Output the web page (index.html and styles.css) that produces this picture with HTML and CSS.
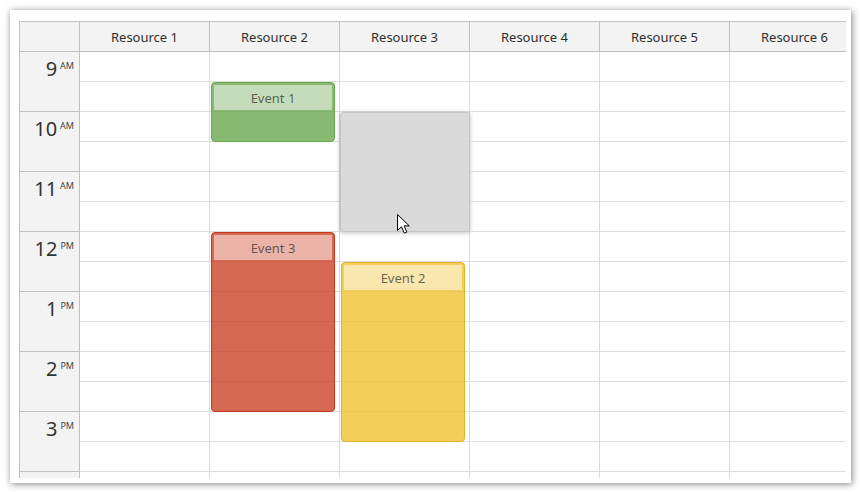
FILE: index.html
```html
<!DOCTYPE html>
<html>
<head>
<meta charset="utf-8">
<link rel="stylesheet" href="styles.css">
</head>
<body>
<div class="frame">
  <div class="cal">
    <div class="head">
      <div class="corner"></div>
      <div class="res">Resource 1</div>
      <div class="res">Resource 2</div>
      <div class="res">Resource 3</div>
      <div class="res">Resource 4</div>
      <div class="res">Resource 5</div>
      <div class="res">Resource 6</div>
    </div>
    <div class="body">
      <div class="hours">
        <div class="hour"><span class="num">9</span><span class="ampm">AM</span></div>
        <div class="hour"><span class="num">10</span><span class="ampm">AM</span></div>
        <div class="hour"><span class="num">11</span><span class="ampm">AM</span></div>
        <div class="hour"><span class="num">12</span><span class="ampm">PM</span></div>
        <div class="hour"><span class="num">1</span><span class="ampm">PM</span></div>
        <div class="hour"><span class="num">2</span><span class="ampm">PM</span></div>
        <div class="hour"><span class="num">3</span><span class="ampm">PM</span></div>
        <div class="hour"></div>
      </div>
      <div class="col">
        <div class="cell"></div><div class="cell"></div><div class="cell"></div><div class="cell"></div>
        <div class="cell"></div><div class="cell"></div><div class="cell"></div><div class="cell"></div>
        <div class="cell"></div><div class="cell"></div><div class="cell"></div><div class="cell"></div>
        <div class="cell"></div><div class="cell"></div><div class="cell"></div><div class="cell"></div>
      </div>
      <div class="col">
        <div class="cell"></div><div class="cell"></div><div class="cell"></div><div class="cell"></div>
        <div class="cell"></div><div class="cell"></div><div class="cell"></div><div class="cell"></div>
        <div class="cell"></div><div class="cell"></div><div class="cell"></div><div class="cell"></div>
        <div class="cell"></div><div class="cell"></div><div class="cell"></div><div class="cell"></div>
        <div class="event green ev1"><div class="bar">Event 1</div></div>
        <div class="event red ev3"><div class="bar">Event 3</div></div>
      </div>
      <div class="col">
        <div class="cell"></div><div class="cell"></div><div class="cell"></div><div class="cell"></div>
        <div class="cell"></div><div class="cell"></div><div class="cell"></div><div class="cell"></div>
        <div class="cell"></div><div class="cell"></div><div class="cell"></div><div class="cell"></div>
        <div class="cell"></div><div class="cell"></div><div class="cell"></div><div class="cell"></div>
        <div class="ghost"></div>
        <div class="event yellow ev2"><div class="bar">Event 2</div></div>
        <svg class="cursor" width="14" height="21" viewBox="0 0 14 21">
          <path d="M0.5 0.5 L0.5 16.5 L4.5 12.8 L7.3 19.2 L9.8 18.1 L7.1 11.9 L12.3 11.9 Z" fill="#fff" stroke="#000" stroke-width="1" stroke-linejoin="miter"/>
        </svg>
      </div>
      <div class="col">
        <div class="cell"></div><div class="cell"></div><div class="cell"></div><div class="cell"></div>
        <div class="cell"></div><div class="cell"></div><div class="cell"></div><div class="cell"></div>
        <div class="cell"></div><div class="cell"></div><div class="cell"></div><div class="cell"></div>
        <div class="cell"></div><div class="cell"></div><div class="cell"></div><div class="cell"></div>
      </div>
      <div class="col">
        <div class="cell"></div><div class="cell"></div><div class="cell"></div><div class="cell"></div>
        <div class="cell"></div><div class="cell"></div><div class="cell"></div><div class="cell"></div>
        <div class="cell"></div><div class="cell"></div><div class="cell"></div><div class="cell"></div>
        <div class="cell"></div><div class="cell"></div><div class="cell"></div><div class="cell"></div>
      </div>
      <div class="col">
        <div class="cell"></div><div class="cell"></div><div class="cell"></div><div class="cell"></div>
        <div class="cell"></div><div class="cell"></div><div class="cell"></div><div class="cell"></div>
        <div class="cell"></div><div class="cell"></div><div class="cell"></div><div class="cell"></div>
        <div class="cell"></div><div class="cell"></div><div class="cell"></div><div class="cell"></div>
      </div>
    </div>
  </div>
</div>
</body>
</html>
```

FILE: styles.css
```css
* { box-sizing: border-box; }
html, body {
  margin: 0;
  padding: 0;
  background: #ffffff;
}
body {
  padding: 10px;
  font-family: "Noto Sans", "Open Sans", sans-serif;
  color: #333;
}
.frame {
  width: 841px;
  height: 473px;
  background: #fff;
  box-shadow: 1px 1px 7px rgba(0, 0, 0, 0.5);
  padding: 11px 5px 5px 9px;
}
.cal {
  width: 827px;
  height: 457px;
  overflow: hidden;
}
.head {
  display: flex;
  height: 31px;
  border-top: 1px solid #c0c0c0;
  border-bottom: 1px solid #c0c0c0;
  background: #f3f3f3;
}
.corner {
  flex: none;
  width: 61px;
  border-left: 1px solid #c0c0c0;
  border-right: 1px solid #c0c0c0;
}
.res {
  flex: none;
  width: 130px;
  border-right: 1px solid #c0c0c0;
  display: flex;
  align-items: center;
  justify-content: center;
  font-size: 13px;
  color: #2e2e2e;
  padding-top: 1px;
}
.body {
  display: flex;
}
.hours {
  flex: none;
  width: 61px;
  border-left: 1px solid #c0c0c0;
  border-right: 1px solid #c0c0c0;
  background: #f3f3f3;
}
.hour {
  height: 60px;
  border-bottom: 1px solid #c0c0c0;
  display: flex;
  justify-content: flex-end;
  align-items: flex-start;
  padding: 5px 5px 0 0;
}
.num {
  font-size: 20px;
  line-height: 24px;
  color: #333;
}
.ampm {
  font-size: 9px;
  line-height: 12px;
  margin-left: 3px;
  margin-top: 3px;
  color: #444;
}
.col {
  flex: none;
  width: 130px;
  border-right: 1px solid #dadada;
  position: relative;
}
.cell {
  height: 30px;
  border-bottom: 1px solid #dedede;
}
.event {
  position: absolute;
  left: 1px;
  width: 124px;
  border: 1px solid;
  border-radius: 4px;
  padding: 2px;
}
.bar {
  height: 25px;
  background: rgba(255, 255, 255, 0.5);
  font-size: 13px;
  line-height: 26px;
  text-align: center;
  color: rgba(40, 40, 40, 0.7);
}
.green {
  background: rgba(106, 168, 79, 0.8);
  border-color: #6aa84f;
}
.red {
  background: rgba(204, 65, 37, 0.8);
  border-color: #c13a1f;
}
.yellow {
  background: rgba(241, 194, 50, 0.8);
  border-color: #e2b32a;
}
.ev1 { top: 30px; height: 60px; }
.ev3 { top: 180px; height: 180px; }
.ev2 { top: 210px; height: 180px; }
.ghost {
  position: absolute;
  left: 0;
  top: 60px;
  width: 130px;
  height: 120px;
  background: rgba(216, 216, 216, 0.95);
  border: 1px solid #c4c4c4;
  border-radius: 3px;
  box-shadow: 0 1px 4px rgba(0, 0, 0, 0.25);
}
.cursor {
  position: absolute;
  left: 57px;
  top: 162px;
}
```
